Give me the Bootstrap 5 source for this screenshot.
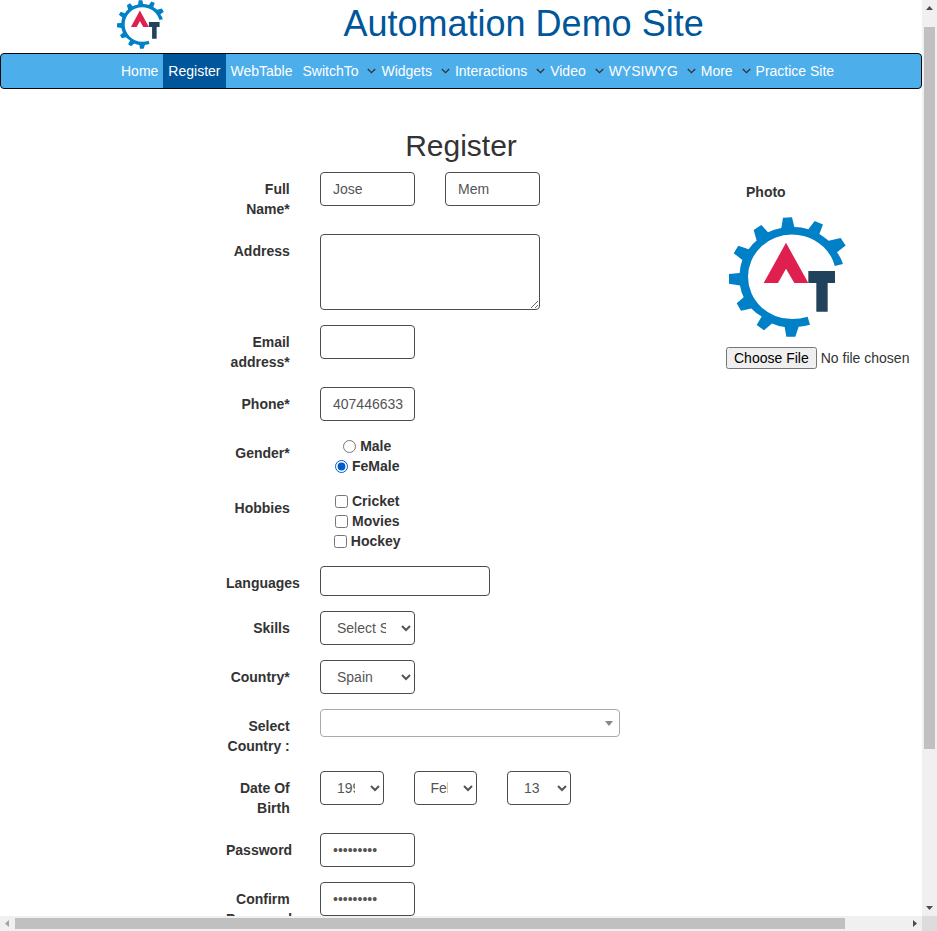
<!DOCTYPE html>
<html lang="en">
<head>
<meta charset="utf-8">
<meta name="viewport" content="width=device-width, initial-scale=1">
<title>Register</title>
<link href="https://cdn.jsdelivr.net/npm/bootstrap@5.3.0/dist/css/bootstrap.min.css" rel="stylesheet">
<style>
body{font-family:"Liberation Sans",Arial,sans-serif;font-size:14px;line-height:20px;color:#333;background:#fff}
.shell{display:grid;grid-template:916px 15px/922px 15px;width:937px;height:931px}
.site-logo{width:47px;height:49px;margin-left:117px;flex:none}
.site-head{height:53px}
.site-head h1{font-size:36px;line-height:40px;color:#00569b;margin:4px 0 0 179.5px;white-space:nowrap}
.main-nav{height:36px;border:1px solid #080808;border-radius:4px;background:#4daeec;padding:0 0 0 115px}
.main-nav .nav-link{color:#fff;padding:7px 5px;white-space:nowrap;height:34px}
.main-nav .has-menu{padding-right:0}
.main-nav .nav-link.active{background:#00569b}
.main-nav svg{width:9px;height:6px;margin-left:8.9px;flex:none;color:#333}
h2{font-size:30px;line-height:33px;margin:40px 0 10px}
.form-area{padding-left:226px}
.fields{width:394px}
.field-row{display:flex;align-items:flex-start;margin-bottom:15px}
.field-name{width:63.75px;margin-right:30.25px;padding-top:7px;text-align:right;font-weight:700;flex:none}
.field-row .form-control{width:95px;height:34px;padding:6px 12px;border:1px solid #4c4c4c;border-radius:4px;font-size:14px;line-height:20px;color:#555;flex:none}
.field-row select.form-control{appearance:auto}
.field-row .phone{padding-right:10px}
.field-row .addr{width:220px;height:76px;resize:both;min-height:0}
.field-row .lang{width:170px;height:30px}
.field-row .date-part{width:63.5px}
.gap-col{gap:30px}
.choices{width:94.6px;text-align:center;font-weight:700}
.choices label{display:flex;justify-content:center;align-items:center;height:20px;gap:3.9px}
.choices input{margin:1px 0 0;width:13px;height:13px;accent-color:#005cc8}
.combo{width:300px;height:28px;border:1px solid #aaa;border-radius:4px;padding-right:6px;flex:none}
.combo i{border:solid transparent;border-width:5px 4px 0;border-top-color:#888}
.photo-col{margin-left:106px;padding-top:10px;width:190px}
.photo-col b{display:block;margin-left:20px}
.photo-col svg{display:block;width:117px;height:120px;margin:15px 0 10px 3px}
.photo-col input{display:block;width:190px;height:22px;line-height:16px;white-space:nowrap}
.photo-col input::file-selector-button{line-height:16px}
.track{background:#f0f0f0}
.thumb{background:#c0c0c0}
.track-y .thumb{width:11px;height:722px;margin:10px 0 0 2px}
.track-x .thumb{width:830px;height:11px}
.track svg{display:block;flex:none;fill:#4d4d4d}
.track-y svg{width:15px;height:17px}
.track-x svg{width:15px;height:15px}
.track .dim{fill:#a3a3a3}
.track-end{background:#dcdcdc}
</style>
<script src="https://cdn.jsdelivr.net/npm/bootstrap@5.3.0/dist/js/bootstrap.bundle.min.js"></script>
</head>
<body class="overflow-hidden">
<svg width="0" height="0" class="d-none">
  <symbol id="gear" viewBox="88 140 351 362" preserveAspectRatio="none">
    <path fill="#0080c7" d="M430 282 Q424 263 412 246L438 226 423 203 387 212Q374 200 359 191L370 163 345 152 326 177Q305 170 284 170L277 141 250 142 245 173Q222 177 205 186L185 164 162 179 171 211Q157 222 147 237L116 227 102 249 128 270Q121 288 120 309L88 312V341L121 347Q124 366 132 382L111 400 124 423 155 416Q168 430 186 440L171 466 193 482 217 461Q235 469 255 472L260 501H287L297 471Q315 470 331 465L324 441Q302 448 277 448A132 127.5 0 0 1 145 320.5A132 127.5 0 0 1 277 193C336 193 392 232 405 288Z"/>
    <path fill="#df204f" d="M259 218 326 339H284L259 296 235 339H192Z"/>
    <path fill="#21425c" d="M326 303H406V339H384V426H350V339H326Z"/>
  </symbol>
  <symbol id="chev" viewBox="0 0 9 6"><path d="M.8 1 4.5 4.7 8.2 1" fill="none" stroke="currentColor" stroke-width="1.3"/></symbol>
</svg>
<div class="shell">
  <div class="overflow-hidden">
    <header class="site-head d-flex align-items-start">
      <svg class="site-logo"><use href="#gear"/></svg>
      <h1 class="fw-normal">Automation Demo Site</h1>
    </header>
    <nav class="main-nav d-flex">
      <a class="nav-link" href="#">Home</a>
      <a class="nav-link active" href="#">Register</a>
      <a class="nav-link" href="#">WebTable</a>
      <a class="nav-link has-menu d-flex align-items-center" href="#">SwitchTo<svg><use href="#chev"/></svg></a>
      <a class="nav-link has-menu d-flex align-items-center" href="#">Widgets<svg><use href="#chev"/></svg></a>
      <a class="nav-link has-menu d-flex align-items-center" href="#">Interactions<svg><use href="#chev"/></svg></a>
      <a class="nav-link has-menu d-flex align-items-center" href="#">Video<svg><use href="#chev"/></svg></a>
      <a class="nav-link has-menu d-flex align-items-center" href="#">WYSIWYG<svg><use href="#chev"/></svg></a>
      <a class="nav-link has-menu d-flex align-items-center" href="#">More<svg><use href="#chev"/></svg></a>
      <a class="nav-link" href="#">Practice Site</a>
    </nav>
    <h2 class="text-center fw-normal">Register</h2>
    <form class="form-area d-flex align-items-start">
      <div class="fields">
        <div class="field-row"><label class="field-name">Full Name*</label><div class="d-flex gap-col"><input class="form-control" value="Jose"><input class="form-control" value="Mem"></div></div>
        <div class="field-row"><label class="field-name">Address</label><textarea class="form-control addr"></textarea></div>
        <div class="field-row"><label class="field-name">Email address*</label><input class="form-control" type="email"></div>
        <div class="field-row"><label class="field-name">Phone*</label><input class="form-control phone" type="tel" value="407446633"></div>
        <div class="field-row"><label class="field-name">Gender*</label><div class="choices">
          <label><input type="radio" name="gender">Male</label>
          <label><input type="radio" name="gender" checked>FeMale</label></div></div>
        <div class="field-row"><label class="field-name">Hobbies</label><div class="choices">
          <label><input type="checkbox">Cricket</label>
          <label><input type="checkbox">Movies</label>
          <label><input type="checkbox">Hockey</label></div></div>
        <div class="field-row"><label class="field-name">Languages</label><div class="form-control lang"></div></div>
        <div class="field-row"><label class="field-name">Skills</label><select class="form-control"><option>Select Skills</option></select></div>
        <div class="field-row"><label class="field-name">Country*</label><select class="form-control"><option>Spain</option></select></div>
        <div class="field-row"><label class="field-name">Select Country :</label><div class="combo d-flex align-items-center justify-content-end"><i></i></div></div>
        <div class="field-row"><label class="field-name">Date Of Birth</label><div class="d-flex gap-col">
          <select class="form-control date-part"><option>1995</option></select>
          <select class="form-control date-part"><option>February</option></select>
          <select class="form-control date-part"><option>13</option></select></div></div>
        <div class="field-row"><label class="field-name">Password</label><input class="form-control" type="password" value="Secret123"></div>
        <div class="field-row"><label class="field-name">Confirm Password</label><input class="form-control" type="password" value="Secret123"></div>
      </div>
      <div class="photo-col">
        <b>Photo</b>
        <svg><use href="#gear"/></svg>
        <input type="file">
      </div>
    </form>
  </div>
  <div class="track track-y d-flex flex-column">
    <svg viewBox="0 0 15 17"><path d="M4 10 7.5 6 11 10Z"/></svg>
    <div class="thumb"></div>
    <svg class="mt-auto" viewBox="0 0 15 17"><path d="M4 7 7.5 11 11 7Z"/></svg>
  </div>
  <div class="track track-x d-flex align-items-center">
    <svg class="dim" viewBox="0 0 15 15"><path d="M9 4 5 7.5 9 11Z"/></svg>
    <div class="thumb"></div>
    <svg class="ms-auto" viewBox="0 0 15 15"><path d="M6 4 10 7.5 6 11Z"/></svg>
  </div>
  <div class="track-end"></div>
</div>
</body>
</html>
